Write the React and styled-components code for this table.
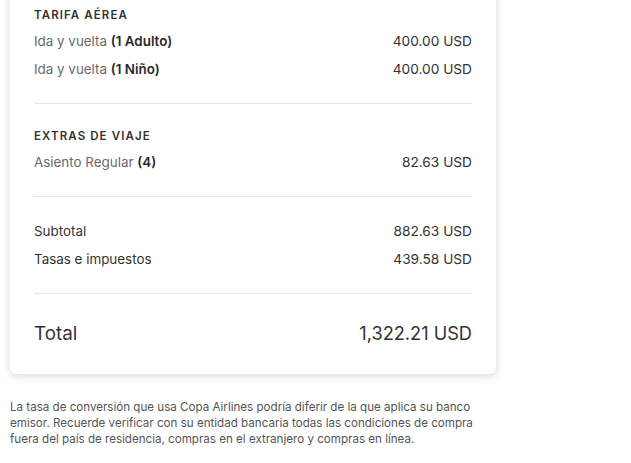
import React from 'react'
import styled, { createGlobalStyle } from 'styled-components'

const GlobalStyle = createGlobalStyle`
  body {
    margin: 0;
    background: #ffffff;
    font-family: Inter, "Noto Sans", sans-serif;
    color: #333333;
  }
`

const Page = styled.div`
  width: 631px;
  padding: 0 10px;
  box-sizing: border-box;
`

const Card = styled.div`
  width: 486px;
  margin-top: -12px;
  padding: 12px 24px 0;
  box-sizing: border-box;
  background: #ffffff;
  border-radius: 6px;
  box-shadow: 0 2px 8px rgba(0, 0, 0, 0.16);
`

const Section = styled.div`
  padding: ${p => p.$top}px 0 ${p => (p.$last ? '22px' : '20px')};
  border-bottom: ${p => (p.$last ? 'none' : '1px solid #e6e6e6')};
`

const Heading = styled.div`
  font-size: 11.5px;
  font-weight: 600;
  letter-spacing: 1.1px;
  line-height: 20px;
  text-transform: uppercase;
  color: #333333;
  margin-bottom: 2px;
`

const Row = styled.div`
  display: flex;
  justify-content: space-between;
  align-items: center;
  height: ${p => (p.$total ? '38px' : '28px')};
  font-size: ${p => (p.$total ? '18.8px' : '13.4px')};
  color: ${p => (p.$muted ? '#6a6a6a' : '#333333')};
`

const Strong = styled.b`
  font-weight: 600;
  color: #2b2b2b;
`

const Amount = styled.span`
  color: #333333;
  font-size: ${p => (p.$total ? '18.2px' : '13.7px')};
`

const Note = styled.p`
  width: 480px;
  margin: 25px 0 0;
  font-size: 11.6px;
  line-height: 16px;
  color: #555555;
`

export default function App() {
  return (
    <Page>
      <GlobalStyle />
      <Card>
        <Section $top={5}>
          <Heading>Tarifa aérea</Heading>
          <Row $muted>
            <span>Ida y vuelta <Strong>(1 Adulto)</Strong></span>
            <Amount>400.00 USD</Amount>
          </Row>
          <Row $muted>
            <span>Ida y vuelta <Strong>(1 Niño)</Strong></span>
            <Amount>400.00 USD</Amount>
          </Row>
        </Section>
        <Section $top={22}>
          <Heading>Extras de viaje</Heading>
          <Row $muted>
            <span>Asiento Regular <Strong>(4)</Strong></span>
            <Amount>82.63 USD</Amount>
          </Row>
        </Section>
        <Section $top={20}>
          <Row>
            <span>Subtotal</span>
            <Amount>882.63 USD</Amount>
          </Row>
          <Row>
            <span>Tasas e impuestos</span>
            <Amount>439.58 USD</Amount>
          </Row>
        </Section>
        <Section $top={20} $last>
          <Row $total>
            <span>Total</span>
            <Amount $total>1,322.21 USD</Amount>
          </Row>
        </Section>
      </Card>
      <Note>
        La tasa de conversión que usa Copa Airlines podría diferir de la que aplica su banco
        emisor. Recuerde verificar con su entidad bancaria todas las condiciones de compra
        fuera del país de residencia, compras en el extranjero y compras en línea.
      </Note>
    </Page>
  )
}
